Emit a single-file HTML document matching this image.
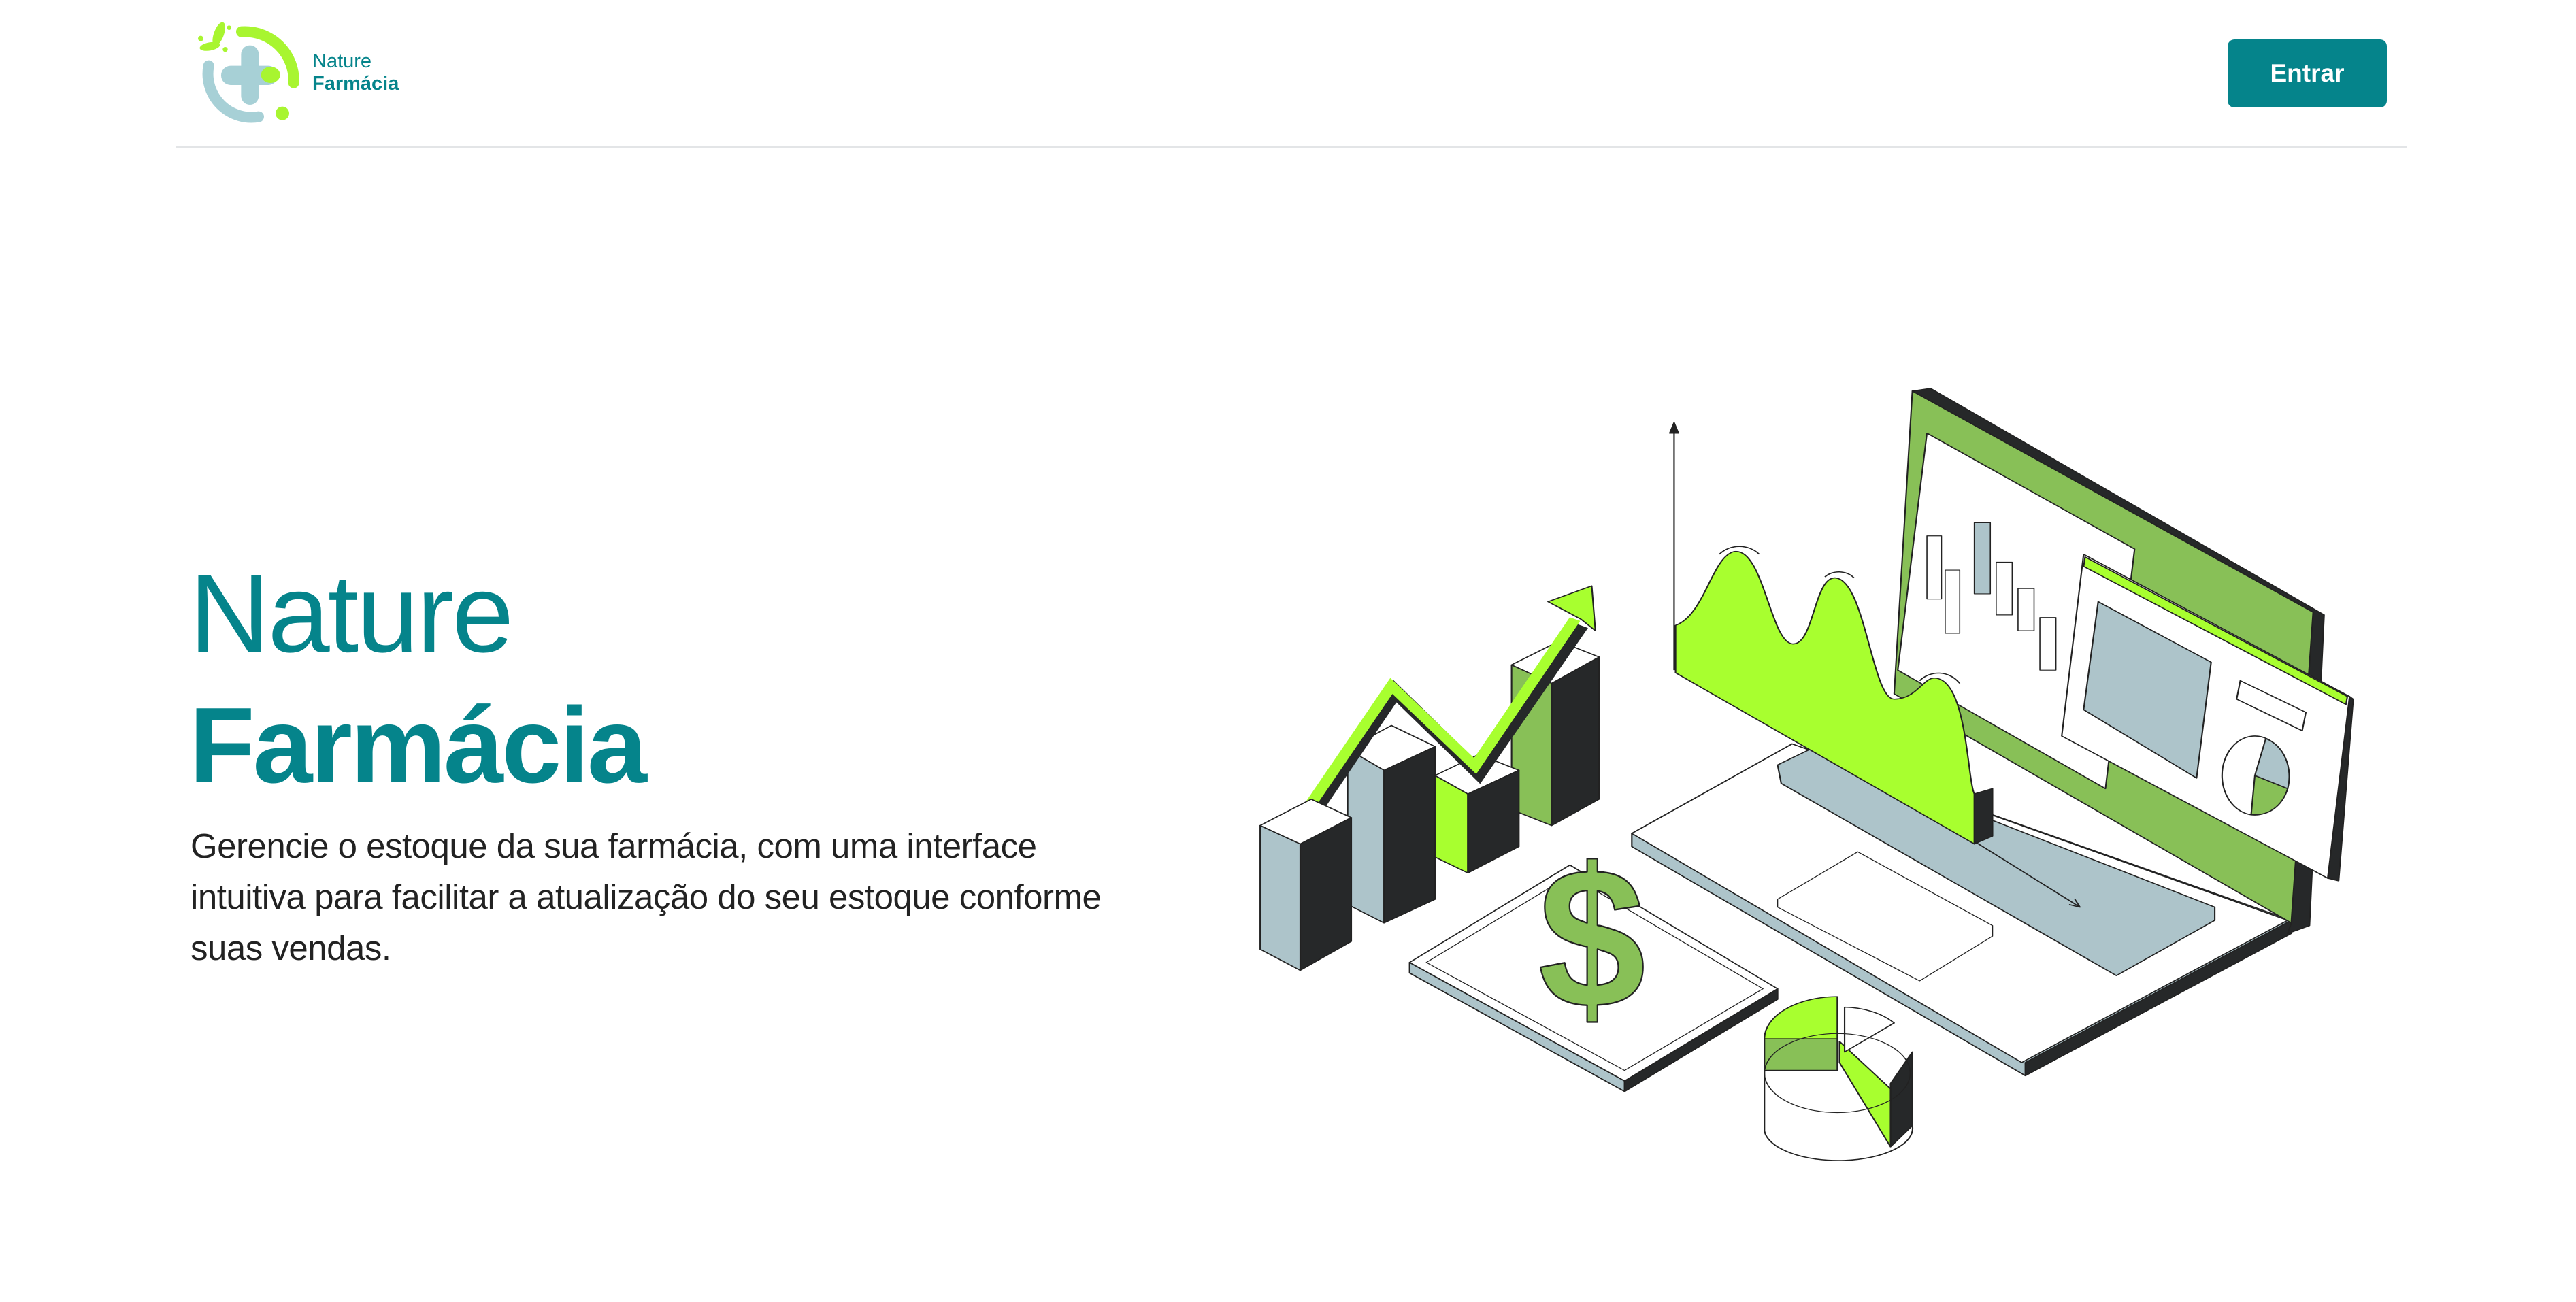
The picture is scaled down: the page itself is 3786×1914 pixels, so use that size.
<!DOCTYPE html>
<html><head><meta charset="utf-8"><style>
html,body{margin:0;padding:0;background:#fff;width:3786px;height:1914px;overflow:hidden;position:relative;font-family:"Liberation Sans",sans-serif}
.abs{position:absolute}
.line{left:258px;top:215px;width:3280px;height:3px;background:#e3e5e7}
.btn{left:3274px;top:58px;width:234px;height:100px;background:#05848b;border-radius:10px;color:#fff;font-weight:bold;font-size:37px;line-height:100px;text-align:center}
.t1{left:278px;top:820px;font-size:164px;color:#05848b;line-height:1;letter-spacing:-3px}
.t2{left:278px;top:1017px;font-size:158px;font-weight:bold;color:#05848b;line-height:1;letter-spacing:-3px}
.p{left:280px;top:1206px;width:1420px;font-size:51px;line-height:75px;color:#222;letter-spacing:-0.5px}
.lt{left:459px;font-size:29px;color:#05848b;line-height:1}
</style></head><body>
<svg class="abs" style="left:260px;top:0" width="400" height="230" viewBox="0 0 1200 690">
<path d="M285 140 A215 215 0 0 1 515 365" fill="none" stroke="#a8f530" stroke-width="48" stroke-linecap="round"/>
<path d="M140 290 A192 192 0 0 0 360 515" fill="none" stroke="#a7d0d6" stroke-width="48" stroke-linecap="round"/>
<rect x="283" y="200" width="78" height="262" rx="39" fill="#a7d0d6"/>
<rect x="195" y="290" width="250" height="85" rx="42" fill="#a7d0d6"/>
<ellipse cx="413" cy="330" rx="42" ry="36" fill="#a8f530"/>
<circle cx="465" cy="500" r="30" fill="#a8f530"/>
<ellipse cx="185" cy="150" rx="22" ry="55" transform="rotate(20 185 150)" fill="#a8f530"/>
<ellipse cx="145" cy="205" rx="45" ry="18" transform="rotate(-10 145 205)" fill="#a8f530"/>
<circle cx="105" cy="170" r="12" fill="#a8f530"/><circle cx="230" cy="122" r="10" fill="#a8f530"/><circle cx="213" cy="218" r="11" fill="#a8f530"/>
</svg>
<div class="abs lt" style="top:76px">Nature</div>
<div class="abs lt" style="top:109px;font-weight:bold">Farmácia</div>
<div class="abs btn">Entrar</div>
<div class="abs line"></div>
<div class="abs t1">Nature</div>
<div class="abs t2">Farmácia</div>
<div class="abs p">Gerencie o estoque da sua farmácia, com uma interface intuitiva para facilitar a atualização do seu estoque conforme suas vendas.</div>

<svg class="abs" style="left:1820px;top:540px" width="1660" height="1200" viewBox="0 0 1550 1550" preserveAspectRatio="none" stroke="#222" stroke-width="2" stroke-linejoin="round">
<!-- laptop base -->
<polygon points="540,885 760,715 1445,1050 1440,1075 1080,1345 540,910" fill="#adc4ca"/>
<polygon points="1445,1050 1445,1075 1080,1345 1080,1320" fill="#262829"/>
<polygon points="540,885 760,715 1440,1050 1075,1320" fill="#fff"/>
<polygon points="740,755 785,725 1340,1025 1340,1050 1205,1155 745,790" fill="#adc4ca"/>
<polygon points="740,1010 850,920 1035,1060 1035,1080 935,1165 740,1025" fill="#fff" stroke-width="1.5"/>
<!-- screen -->
<polygon points="925,45 950,40 1490,470 1470,1060 1440,1075 1445,1055" fill="#262829"/>
<polygon points="925,45 1475,465 1445,1055 900,620" fill="#88c057"/>
<polygon points="945,125 1230,345 1190,800 905,575" fill="#fff"/>
<g fill="#fff" stroke-width="1.5">
<rect x="945" y="320" width="20" height="120"/><rect x="970" y="385" width="20" height="120"/><rect x="1010" y="295" width="22" height="135" fill="#adc4ca"/><rect x="1040" y="370" width="22" height="100"/><rect x="1070" y="420" width="22" height="80"/><rect x="1100" y="475" width="22" height="100"/>
</g>
<!-- wave -->
<polygon points="1010,810 1035,800 1035,890 1010,905" fill="#262829"/>
<path d="M600 490 C640 470 650 360 680 350 C720 340 730 520 760 525 C790 530 790 395 820 400 C860 405 870 630 900 630 C930 630 940 590 955 590 C1000 590 1000 780 1010 810 L1010 905 L600 580 Z" fill="#a8ff2f"/>
<path d="M660 355 C675 335 700 335 715 355 M805 398 C815 385 835 385 845 400 M935 595 C950 575 975 575 990 600" fill="none"/>
<line x1="598" y1="575" x2="598" y2="115"/><polygon points="592,125 598,105 604,125" fill="#222"/>
<line x1="1010" y1="900" x2="1155" y2="1025"/><path d="M1140 1020 L1155 1025 L1148 1010" fill="none"/>
<!-- card -->
<polygon points="1525,625 1530,630 1510,975 1495,970" fill="#262829"/>
<polygon points="1160,355 1525,625 1495,970 1130,700" fill="#fff"/>
<polygon points="1162,360 1522,625 1520,640 1160,378" fill="#a8ff2f"/>
<polygon points="1180,445 1335,560 1315,780 1160,650" fill="#adc4ca"/>
<polygon points="1375,595 1465,655 1460,690 1370,630" fill="#fff"/>
<ellipse cx="1395" cy="775" rx="45" ry="75" fill="#fff"/>
<path d="M1395 775 L1440 800 A45 75 0 0 1 1390 848 Z" fill="#88c057"/><path d="M1395 775 L1410 705 A45 75 0 0 1 1440 800 Z" fill="#adc4ca"/>
<!-- bars -->
<g>
<polygon points="375,565 430,600 430,870 375,840" fill="#88c057"/><polygon points="430,600 495,550 495,820 430,870" fill="#262829"/><polygon points="375,565 440,520 495,550 430,600" fill="#fff"/>
<polygon points="150,725 200,765 200,1055 150,1020" fill="#adc4ca"/><polygon points="200,765 270,720 270,1010 200,1055" fill="#262829"/><polygon points="150,725 210,680 270,720 200,765" fill="#fff"/>
<polygon points="270,775 315,810 315,960 270,930" fill="#a8ff2f"/><polygon points="315,810 385,765 385,910 315,960" fill="#262829"/><polygon points="270,775 330,735 385,765 315,810" fill="#fff"/>
<polyline points="100,850 215,615 330,770 470,490" fill="none" stroke="#262829" stroke-width="22" stroke-linejoin="miter"/>
<polyline points="95,838 210,605 325,757 462,478" fill="none" stroke="#a8ff2f" stroke-width="16" stroke-linejoin="miter"/>
<polygon points="425,445 485,415 490,500 470,478" fill="#a8ff2f"/>
<polygon points="30,870 85,905 85,1145 30,1105" fill="#adc4ca"/><polygon points="85,905 155,855 155,1090 85,1145" fill="#262829"/><polygon points="30,870 100,820 155,855 85,905" fill="#fff"/>
</g>
<!-- tablet -->
<polygon points="235,1130 235,1150 530,1375 740,1200 740,1180 530,1355" fill="#adc4ca"/>
<polygon points="530,1355 740,1180 740,1200 530,1375" fill="#262829"/>
<polygon points="235,1130 455,945 740,1180 530,1355" fill="#fff"/>
<polygon points="258,1130 455,965 720,1180 530,1335" fill="none" stroke-width="1.5"/>
<text x="693" y="1215" text-anchor="middle" font-family="Liberation Sans,sans-serif" font-weight="bold" font-size="380" fill="#88c057" stroke="#222" stroke-width="3" transform="scale(0.7,1)">$</text>
<!-- pie -->
<path d="M722 1270 L722 1450 A100 60 0 0 0 925 1440 L925 1300" fill="#fff"/>
<path d="M895 1360 L895 1480 L925 1440 L925 1300 Z" fill="#262829"/>
<path d="M825 1280 L895 1370 L895 1480 L825 1320 Z" fill="#a8ff2f"/>
<path d="M722 1275 A100 80 0 0 1 822 1195 L822 1280 Z" fill="#a8ff2f"/>
<rect x="722" y="1275" width="100" height="60" fill="#88c057"/>
<path d="M832 1215 A90 80 0 0 1 900 1245 L832 1300 Z" fill="#fff"/>
<ellipse cx="822" cy="1340" rx="100" ry="75" fill="none" stroke-width="1.5"/>
</svg>
</body></html>
